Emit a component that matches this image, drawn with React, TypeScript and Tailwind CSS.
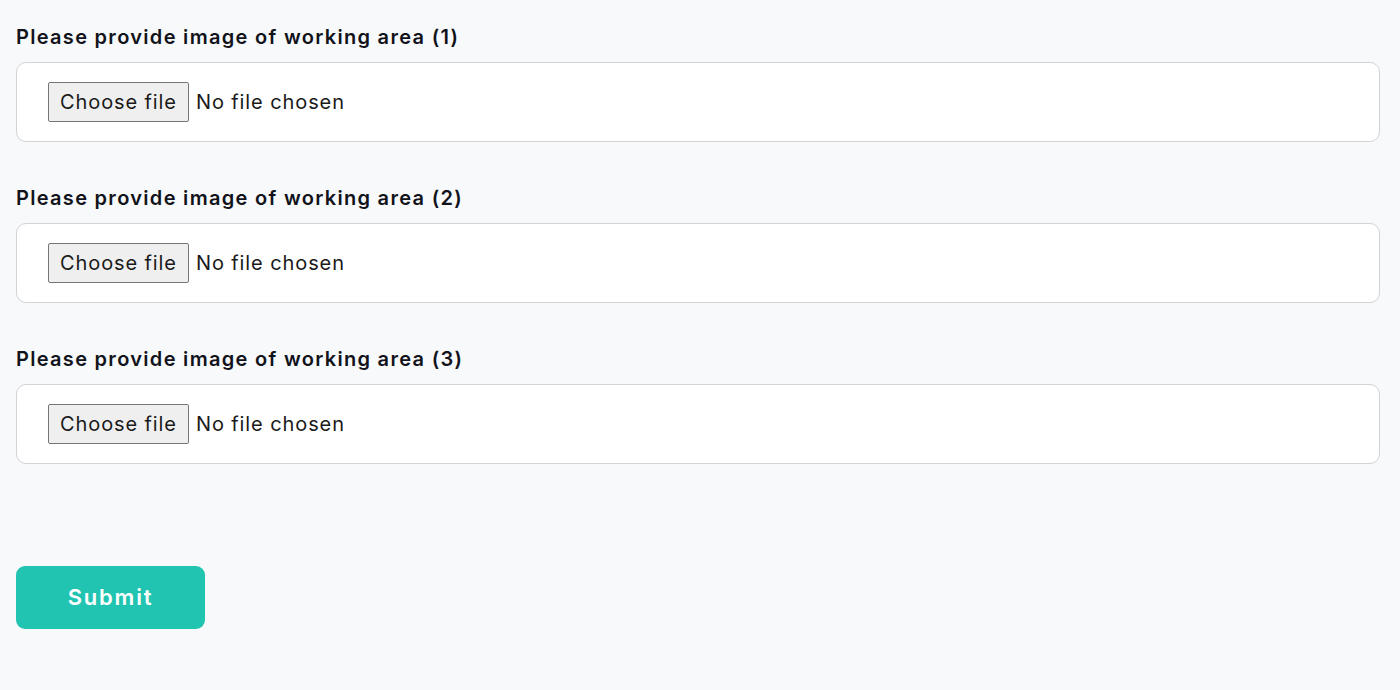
import React from "react";

function FileField({ label }: { label: string }) {
  return (
    <div className="flex flex-col">
      <div className="text-[20px] leading-[24px] font-semibold text-[#12131a] tracking-[1.3px]">{label}</div>
      <div className="mt-[13px] h-[80px] rounded-[10px] border border-[#d1d3d7] bg-white flex items-center pl-[31px]">
        <label className="flex items-center cursor-pointer tracking-[0.9px]">
          <input type="file" className="hidden" />
          <span className="h-[40px] pl-[11px] pr-[11px] flex items-center bg-[#efefef] border border-[#767676] rounded-[2px] text-[20px] text-[#1a1a1a]">
            Choose file
          </span>
          <span className="ml-[7px] text-[20px] text-[#1a1a1a]">No file chosen</span>
        </label>
      </div>
    </div>
  );
}

export default function App() {
  return (
    <div
      className="min-h-[690px] w-full bg-[#f8f9fb] px-[16px] pt-[25px] pr-[20px]"
      style={{ fontFamily: "Inter, 'Noto Sans', sans-serif" }}
    >
      <div className="flex flex-col gap-[44px]">
        <FileField label="Please provide image of working area (1)" />
        <FileField label="Please provide image of working area (2)" />
        <FileField label="Please provide image of working area (3)" />
      </div>
      <button className="mt-[102px] w-[189px] h-[63px] rounded-[9px] bg-[#21c4b1] text-white text-[22px] font-semibold tracking-[1.8px]">
        Submit
      </button>
    </div>
  );
}
